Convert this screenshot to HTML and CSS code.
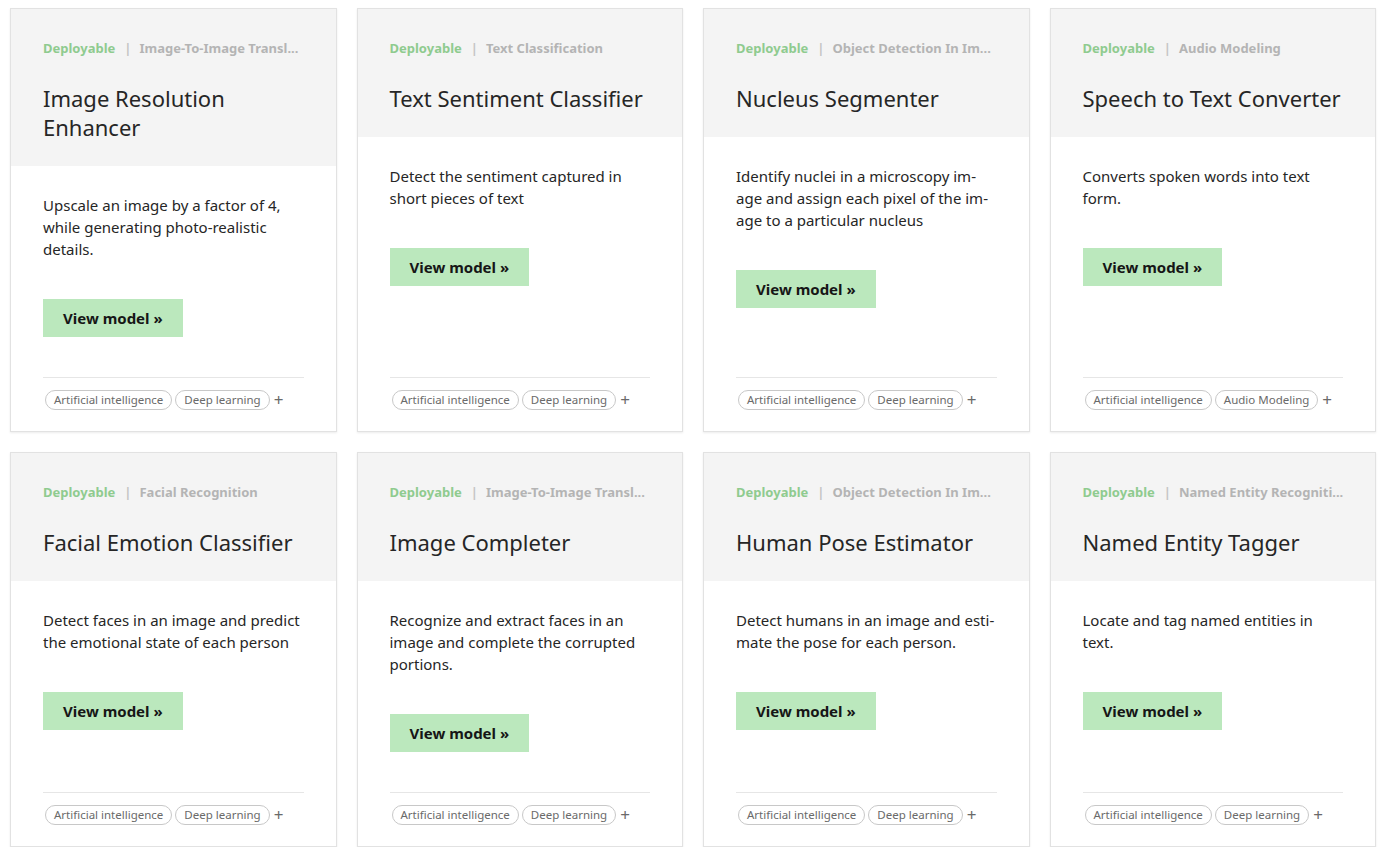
FILE: index.html
```html
<!DOCTYPE html>
<html lang="en">
<head>
<meta charset="utf-8">
<title>Models</title>
<link rel="stylesheet" href="styles.css">
</head>
<body>
<main class="grid">
  <article class="card">
    <header class="card-head">
      <div class="meta"><span class="status">Deployable</span><span class="sep">|</span><span class="cat">Image-To-Image Transl...</span></div>
      <h2 class="title">Image Resolution Enhancer</h2>
    </header>
    <div class="card-body">
      <p class="desc">Upscale an image by a factor of 4, while generating photo-realistic details.</p>
      <a class="btn" href="#">View model »</a>
    </div>
    <footer class="card-foot"><span class="tag">Artificial intelligence</span><span class="tag">Deep learning</span><span class="plus">+</span></footer>
  </article>

  <article class="card">
    <header class="card-head">
      <div class="meta"><span class="status">Deployable</span><span class="sep">|</span><span class="cat">Text Classification</span></div>
      <h2 class="title">Text Sentiment Classifier</h2>
    </header>
    <div class="card-body">
      <p class="desc">Detect the sentiment captured in short pieces of text</p>
      <a class="btn" href="#">View model »</a>
    </div>
    <footer class="card-foot"><span class="tag">Artificial intelligence</span><span class="tag">Deep learning</span><span class="plus">+</span></footer>
  </article>

  <article class="card">
    <header class="card-head">
      <div class="meta"><span class="status">Deployable</span><span class="sep">|</span><span class="cat">Object Detection In Im...</span></div>
      <h2 class="title">Nucleus Segmenter</h2>
    </header>
    <div class="card-body">
      <p class="desc">Identify nuclei in a microscopy im&shy;age and assign each pixel of the im&shy;age to a particular nucleus</p>
      <a class="btn" href="#">View model »</a>
    </div>
    <footer class="card-foot"><span class="tag">Artificial intelligence</span><span class="tag">Deep learning</span><span class="plus">+</span></footer>
  </article>

  <article class="card">
    <header class="card-head">
      <div class="meta"><span class="status">Deployable</span><span class="sep">|</span><span class="cat">Audio Modeling</span></div>
      <h2 class="title">Speech to Text Converter</h2>
    </header>
    <div class="card-body">
      <p class="desc">Converts spoken words into text form.</p>
      <a class="btn" href="#">View model »</a>
    </div>
    <footer class="card-foot"><span class="tag">Artificial intelligence</span><span class="tag">Audio Modeling</span><span class="plus">+</span></footer>
  </article>

  <article class="card">
    <header class="card-head">
      <div class="meta"><span class="status">Deployable</span><span class="sep">|</span><span class="cat">Facial Recognition</span></div>
      <h2 class="title">Facial Emotion Classifier</h2>
    </header>
    <div class="card-body">
      <p class="desc">Detect faces in an image and predict the emotional state of each person</p>
      <a class="btn" href="#">View model »</a>
    </div>
    <footer class="card-foot"><span class="tag">Artificial intelligence</span><span class="tag">Deep learning</span><span class="plus">+</span></footer>
  </article>

  <article class="card">
    <header class="card-head">
      <div class="meta"><span class="status">Deployable</span><span class="sep">|</span><span class="cat">Image-To-Image Transl...</span></div>
      <h2 class="title">Image Completer</h2>
    </header>
    <div class="card-body">
      <p class="desc">Recognize and extract faces in an image and complete the corrupted portions.</p>
      <a class="btn" href="#">View model »</a>
    </div>
    <footer class="card-foot"><span class="tag">Artificial intelligence</span><span class="tag">Deep learning</span><span class="plus">+</span></footer>
  </article>

  <article class="card">
    <header class="card-head">
      <div class="meta"><span class="status">Deployable</span><span class="sep">|</span><span class="cat">Object Detection In Im...</span></div>
      <h2 class="title">Human Pose Estimator</h2>
    </header>
    <div class="card-body">
      <p class="desc">Detect humans in an image and esti&shy;mate the pose for each person.</p>
      <a class="btn" href="#">View model »</a>
    </div>
    <footer class="card-foot"><span class="tag">Artificial intelligence</span><span class="tag">Deep learning</span><span class="plus">+</span></footer>
  </article>

  <article class="card">
    <header class="card-head">
      <div class="meta"><span class="status">Deployable</span><span class="sep">|</span><span class="cat">Named Entity Recogniti...</span></div>
      <h2 class="title">Named Entity Tagger</h2>
    </header>
    <div class="card-body">
      <p class="desc">Locate and tag named entities in text.</p>
      <a class="btn" href="#">View model »</a>
    </div>
    <footer class="card-foot"><span class="tag">Artificial intelligence</span><span class="tag">Deep learning</span><span class="plus">+</span></footer>
  </article>
</main>
</body>
</html>
```

FILE: styles.css
```css
* { box-sizing: border-box; }
html, body { margin: 0; padding: 0; background: #ffffff; }
body {
  font-family: "Noto Sans", "Open Sans", sans-serif;
  color: #161616;
}
.grid {
  display: grid;
  grid-template-columns: repeat(4, 326.5px);
  column-gap: 20px;
  row-gap: 20px;
  padding: 8px 0 0 10px;
}
.card {
  display: flex;
  flex-direction: column;
  border: 1px solid #e2e2e2;
  background: #fff;
  box-shadow: 0 1px 2px rgba(0,0,0,0.08);
}
.card-head {
  background: #f4f4f4;
  padding: 31px 32px 24px 32px;
}
.meta {
  font-size: 13px;
  font-weight: 700;
  line-height: 16px;
  white-space: nowrap;
}
.status { color: #8fcb8f; }
.sep { color: #c4c4c4; font-weight: 700; margin: 0 8px 0 9px; }
.cat { color: #b4b4b4; }
.title {
  margin: 28px 0 0 0;
  font-size: 22px;
  font-weight: 400;
  line-height: 29px;
  color: #262626;
}
.card-body {
  padding: 28px 32px 40px 32px;
  display: flex;
  flex-direction: column;
  align-items: flex-start;
}
.desc {
  margin: 0;
  font-size: 15px;
  line-height: 22px;
  color: #262626;
  hyphens: manual;
}
.btn {
  margin-top: 39px;
  display: inline-block;
  background: #bbe8bd;
  color: #161616;
  font-weight: 700;
  font-size: 15px;
  line-height: 38px;
  height: 38px;
  padding: 0 20px;
  text-decoration: none;
}
.card-foot {
  margin: auto 32px 0 32px;
  border-top: 1px solid #e6e6e6;
  padding: 12px 0 21px 2px;
  display: flex;
  align-items: center;
  height: 54px;
  gap: 3px;
}
.tag {
  display: inline-block;
  border: 1px solid #c8c8c8;
  border-radius: 10px;
  height: 20px;
  line-height: 18px;
  padding: 0 8px;
  font-size: 11.5px;
  color: #6a6a6a;
  white-space: nowrap;
}
.plus {
  color: #6a6a6a;
  font-size: 17px;
  line-height: 18px;
  margin-left: 1px;
}
```
